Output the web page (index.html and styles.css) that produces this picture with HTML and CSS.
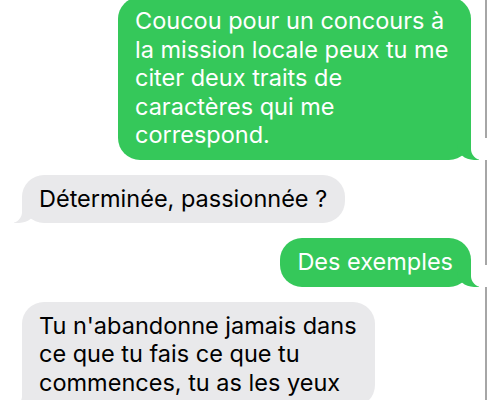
FILE: index.html
```html
<!DOCTYPE html>
<html lang="fr">
<head>
  <meta charset="UTF-8">
  <meta name="viewport" content="width=device-width, initial-scale=1.0">
  <title>Messages</title>
  <link rel="stylesheet" href="styles.css">
</head>
<body>
  <div class="thread">
    <div class="msg sent first">Coucou pour un concours à la mission locale peux tu me citer deux traits de caractères qui me correspond.</div>
    <div class="msg received">Déterminée, passionnée ?</div>
    <div class="msg sent">Des exemples</div>
    <div class="msg received">Tu n'abandonne jamais dans ce que tu fais ce que tu commences, tu as les yeux</div>
  </div>
</body>
</html>
```

FILE: styles.css
```css
html, body {
  margin: 0;
  height: 100%;
  background: #fff;
}
body {
  font-family: Inter, "Noto Sans", sans-serif;
  overflow: hidden;
}
.thread {
  width: 487px;
  height: 100%;
  border-right: 2px solid #a6a6a6;
  box-sizing: border-box;
  display: flex;
  flex-direction: column;
  gap: 15px;
  padding: 0 14px 0 22px;
}
.msg {
  position: relative;
  font-size: 23.5px;
  line-height: 28.5px;
  padding: 10px 18px 10px 17px;
  border-radius: 22px;
  max-width: 318px;
}
.first {
  margin-top: -3px;
}
.sent {
  align-self: flex-end;
  background: #35c85a;
  color: #fff;
}
.received {
  align-self: flex-start;
  background: #e9e9eb;
  color: #000;
}

/* bubble tails */
.msg::before,
.msg::after {
  content: "";
  position: absolute;
  bottom: 0;
  height: 22px;
}
.sent::before {
  right: -8px;
  width: 22px;
  background: #35c85a;
  border-bottom-left-radius: 17px 15px;
}
.sent::after {
  right: -28px;
  width: 28px;
  background: #fff;
  border-bottom-left-radius: 11px;
}
.received::before {
  left: -8px;
  width: 22px;
  background: #e9e9eb;
  border-bottom-right-radius: 17px 15px;
}
.received::after {
  left: -28px;
  width: 28px;
  background: #fff;
  border-bottom-right-radius: 11px;
}
```
